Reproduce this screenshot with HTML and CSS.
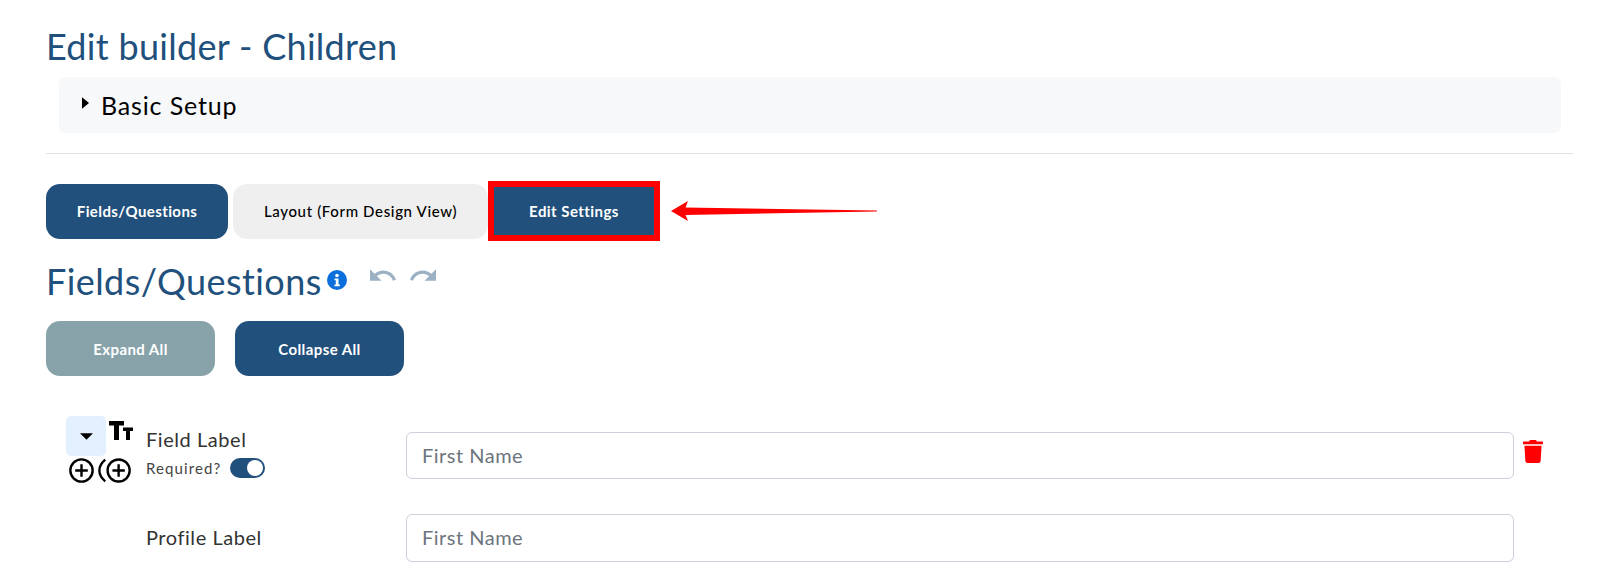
FILE: index.html
```html
<!DOCTYPE html>
<html lang="en">
<head>
<meta charset="utf-8">
<title>Edit builder - Children</title>
<link rel="stylesheet" href="styles.css">
</head>
<body>
<main class="page">
  <h1 class="title">Edit builder - Children</h1>
  <div class="setup">
    <svg class="setup-caret" viewBox="0 0 6 10"><path d="M0 0l6 5-6 5z"/></svg>
    <span class="setup-text">Basic Setup</span>
  </div>
  <hr class="rule">
  <div class="tabs">
    <button class="tab tab-active">Fields/Questions</button>
    <button class="tab tab-light">Layout (Form Design View)</button>
    <button class="tab tab-marked">Edit Settings</button>
    <svg class="arrow" viewBox="0 0 206 20"><path d="M0 10L17 0 14.500 6.500 206 9.500 206 10.500 14.500 14 17 20z"/></svg>
  </div>
  <div class="section-head">
    <h2 class="section-title">Fields/Questions</h2>
    <svg class="info" viewBox="0 0 20 20"><circle cx="10" cy="10" r="10"/><circle class="info-mark" cx="10" cy="5.500" r="1.800"/><path class="info-mark" d="M7.500 8.500h4v6h1.300v1.800H7.500v-1.800h1.300v-4.200H7.500z"/></svg>
    <svg class="hist hist-undo" viewBox="2 7 20.500 9"><path d="M12.500 8C9.850 8 7.450 9 5.600 10.600L2 7V16H11L7.380 12.380C8.770 11.220 10.540 10.500 12.500 10.500C16.040 10.500 19.050 12.810 20.100 16L22.470 15.220C21.080 11.030 17.150 8 12.500 8Z"/></svg>
    <svg class="hist" viewBox="1.500 7 20.500 9"><path d="M18.400 10.600C16.550 9 14.150 8 11.500 8C6.850 8 2.920 11.030 1.540 15.220L3.900 16C4.950 12.810 7.950 10.500 11.500 10.500C13.450 10.500 15.230 11.220 16.620 12.380L13 16H22V7L18.400 10.600Z"/></svg>
  </div>
  <div class="actions">
    <button class="action action-muted">Expand All</button>
    <button class="action">Collapse All</button>
  </div>
  <section class="field">
    <div class="tools">
      <div class="tools-top">
        <span class="toggle-box"><svg class="toggle-caret" viewBox="0 0 12 6"><path d="M0 0h12L6 6z"/></svg></span>
        <svg class="tt" viewBox="0 0 24 19"><path d="M0 0h15v4.500H10V19H5V4.500H0z"/><path d="M14 6.500h10v3.500h-3V19h-4V10h-3z"/></svg>
      </div>
      <div class="tools-bottom">
        <svg class="plus" viewBox="0 0 24 24"><circle cx="12" cy="12" r="10.700"/><path d="M12 6v12M6 12h12"/></svg>
        <svg class="plus plus-group" viewBox="0 0 32 24"><path d="M7 1.500C3 5 1.300 8.500 1.300 12S3 19 7 22.500"/><circle cx="20" cy="12" r="10.700"/><path d="M20 6v12M14 12h12"/></svg>
      </div>
    </div>
    <div class="labels">
      <div class="label">Field Label</div>
      <div class="required">
        <span class="required-text">Required?</span>
        <span class="switch"><span class="knob"></span></span>
      </div>
    </div>
    <input class="input" type="text" placeholder="First Name">
    <svg class="trash" viewBox="0 0 448 512"><path d="M432 32H312l-9.400-18.700A24 24 0 0 0 281.100 0H166.800a23.720 23.720 0 0 0-21.400 13.300L136 32H16A16 16 0 0 0 0 48v32a16 16 0 0 0 16 16h416a16 16 0 0 0 16-16V48a16 16 0 0 0-16-16zM53.200 467a48 48 0 0 0 47.900 45h245.800a48 48 0 0 0 47.900-45L416 128H32z"/></svg>
  </section>
  <section class="field field-second">
    <div class="tools"></div>
    <div class="labels"><div class="label">Profile Label</div></div>
    <input class="input" type="text" placeholder="First Name">
  </section>
</main>
</body>
</html>
```
FILE: styles.css
```css
* { box-sizing: border-box; }
html, body { margin: 0; padding: 0; background: #fff; height: 576px; overflow: hidden; }
body { font-family: "Lato", "Open Sans", sans-serif; color: #000; }
.page { padding: 26px 51px 0 46px; }
.title { margin: 0; font-size: 36px; line-height: 40px; font-weight: 400; color: #20507b; letter-spacing: .3px; height: 51px; }
.setup { margin-left: 13px; margin-right: 12px; height: 56px; background: #f7f8fa; border-radius: 6px; display: flex; align-items: center; padding-left: 23px; }
.setup-caret { width: 7px; height: 12px; fill: #000; margin-right: 12px; margin-top: -4px; }
.setup-text { font-size: 25px; letter-spacing: .85px; }
.rule { margin: 20px 0 0; border: 0; border-top: 1px solid #e2e3e5; }
.tabs { display: flex; align-items: center; height: 60px; margin-top: 27px; }
.tab { border: 0; font: 700 15px "Lato", sans-serif; height: 55px; padding: 0; }
.tab-active { width: 182px; background: #20507b; color: #fff; border-radius: 14px; margin-right: 5px; letter-spacing: .4px; }
.tab-light { width: 255px; background: #efefef; color: #000; border-radius: 14px; letter-spacing: .65px; font-weight: 500; }
.tab-marked { width: 172px; height: 60px; background: #20507b; color: #fff; border: 6px solid #f00; letter-spacing: .45px; }
.arrow { width: 206px; height: 20px; fill: #f00; margin-left: 11px; }
.section-head { display: flex; align-items: flex-start; height: 62px; margin-top: 18px; }
.section-title { margin: 0; font-size: 36px; line-height: 44px; font-weight: 400; color: #20507b; letter-spacing: .42px; }
.info { width: 20px; height: 20px; fill: #0d6fdc; margin: 11px 0 0 5px; }
.info-mark { fill: #fff; }
.hist { width: 26px; height: 12px; fill: #9db1c5; margin: 10px 0 0 14px; }
.hist-undo { margin-left: 23px; }
.actions { display: flex; gap: 20px; }
.action { width: 169px; height: 55px; border: 0; border-radius: 14px; background: #20507b; color: #fff; font: 700 15px "Lato", sans-serif; letter-spacing: .4px; padding: 0; }
.action-muted { background: #87a3a9; }
.field { display: flex; align-items: flex-start; margin-top: 40px; }
.field-second { margin-top: 31px; }
.tools { width: 80px; margin-left: 20px; flex: none; }
.tools-top { display: flex; align-items: flex-start; }
.toggle-box { width: 40px; height: 40px; background: #e2f0ff; border-radius: 5px; display: flex; align-items: center; justify-content: center; flex: none; }
.toggle-caret { width: 13px; height: 7px; fill: #000; }
.tt { width: 24px; height: 19px; fill: #000; margin: 5px 0 0 3px; flex: none; }
.tools-bottom { display: flex; align-items: center; margin-top: 2px; }
.plus { width: 25px; height: 25px; fill: none; stroke: #000; stroke-width: 2.300; margin-left: 3px; flex: none; }
.plus-group { width: 33px; margin-left: 4px; }
.labels { width: 260px; flex: none; }
.label { font-size: 20px; line-height: 24px; margin-top: 11px; color: #333; letter-spacing: .55px; }
.required { display: flex; align-items: center; margin-top: 7px; }
.required-text { font-size: 15px; color: #444; letter-spacing: 1.1px; width: 84px; }
.switch { width: 35px; height: 20px; background: #20507b; border-radius: 10px; display: flex; justify-content: flex-end; align-items: center; padding-right: 2px; }
.knob { width: 16px; height: 16px; background: #fff; border-radius: 50%; }
.input { flex: none; width: 1108px; height: 47px; margin-top: 16px; border: 1px solid #ccd1dc; border-radius: 6px; padding: 0 15px 2px; font: 400 20px "Lato", sans-serif; letter-spacing: .5px; background: #fff; }
.input::placeholder { color: #6c757d; opacity: 1; }
.field-second .input { margin-top: 0; height: 48px; }
.trash { width: 20px; height: 23px; fill: #f00; margin: 24px 0 0 9px; }
```
